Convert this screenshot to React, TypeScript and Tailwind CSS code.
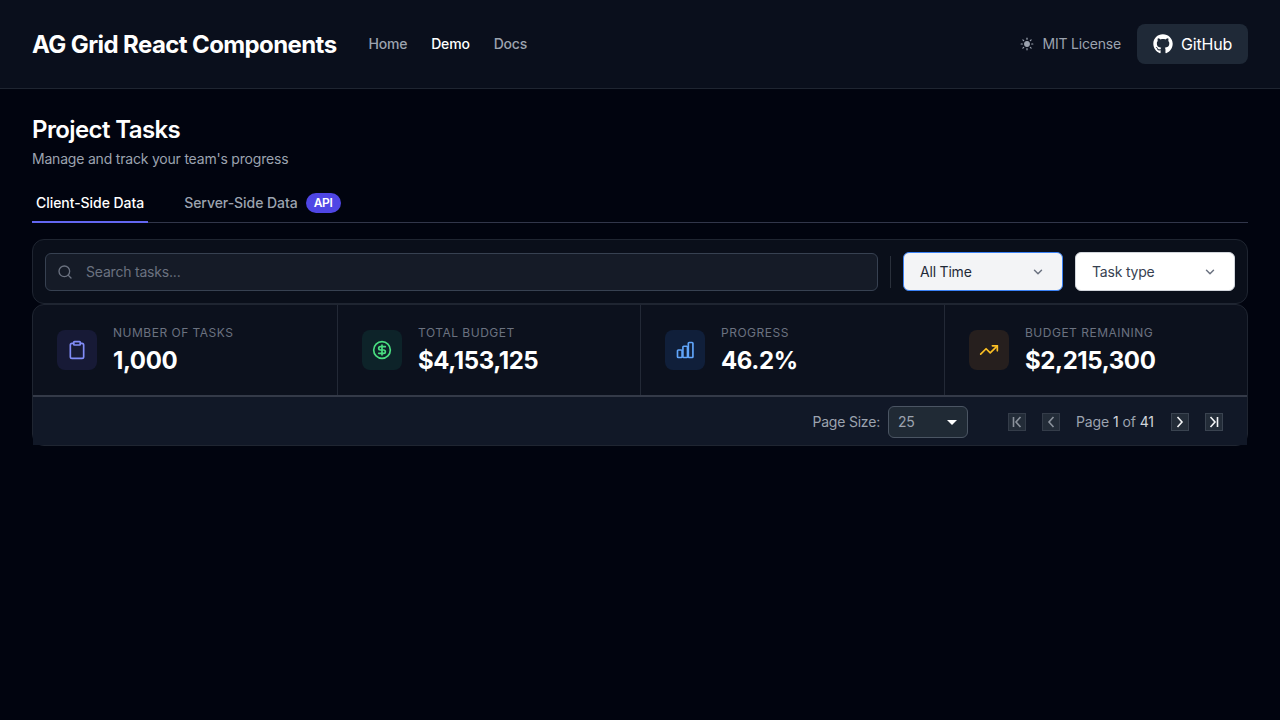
import { ChevronDown, CircleDollarSign, Search, Sun, TrendingUp } from "lucide-react";
import { FaGithub } from "react-icons/fa";
import React from "react";

function Clipboard({ className }: { className?: string }) {
  return (
    <svg viewBox="0 0 24 24" fill="none" stroke="currentColor" strokeWidth="2" strokeLinecap="round" strokeLinejoin="round" className={className}>
      <rect x="8" y="2" width="8" height="4" rx="1" />
      <path d="M16 4h2a2 2 0 0 1 2 2v14a2 2 0 0 1-2 2H6a2 2 0 0 1-2-2V6a2 2 0 0 1 2-2h2" />
    </svg>
  );
}

function Bars({ className }: { className?: string }) {
  return (
    <svg viewBox="0 0 24 24" fill="none" stroke="currentColor" strokeWidth="2" strokeLinecap="round" strokeLinejoin="round" className={className}>
      <rect x="3" y="12" width="5.5" height="9" rx="1" />
      <rect x="9.5" y="7.5" width="5.5" height="13.5" rx="1" />
      <rect x="16" y="3" width="5.5" height="18" rx="1" />
    </svg>
  );
}

const stats = [
  { label: "Number of Tasks", value: "1,000", Icon: Clipboard, box: "bg-[#171a36]", color: "text-[#818cf8]", width: "w-[305px]" },
  { label: "Total Budget", value: "$4,153,125", Icon: CircleDollarSign, box: "bg-[#0d2329]", color: "text-[#4ade80]", width: "w-[303px]" },
  { label: "Progress", value: "46.2%", Icon: Bars, box: "bg-[#101f3a]", color: "text-[#60a5fa]", width: "w-[304px]" },
  { label: "Budget Remaining", value: "$2,215,300", Icon: TrendingUp, box: "bg-[#261f1e]", color: "text-[#fbbf24]", width: "flex-1" },
];

function PageButton({ d, dim }: { d: string; dim?: boolean }) {
  return (
    <div className={dim ? "flex size-[18px] items-center justify-center border border-[#343c49] bg-[#232c38] text-[#8b929c]" : "flex size-[18px] items-center justify-center border border-[#3a4350] bg-[#232c38] text-[#f3f4f6]"}>
      <svg viewBox="0 0 16 16" fill="none" stroke="currentColor" strokeWidth="1.6" className="size-4">
        <path d={d} />
      </svg>
    </div>
  );
}

export default function App() {
  return (
    <div className="min-h-screen bg-[#01040f] font-['Inter',sans-serif] tracking-[-0.2px] text-white">
      <header className="flex h-[89px] items-center justify-between border-b border-[#1f2531] bg-[#0a0f1c] px-8">
        <div className="flex items-center gap-8">
          <h1 className="pt-0.5 text-2xl font-bold tracking-[-0.6px]">AG Grid React Components</h1>
          <nav className="flex items-center gap-6 text-sm font-medium text-[#9ca3af]">
            <span>Home</span>
            <span className="text-white">Demo</span>
            <span>Docs</span>
          </nav>
        </div>
        <div className="flex items-center gap-4">
          <div className="flex items-center gap-[9px] text-sm text-[#9ca3af]">
            <Sun className="size-3.5" fill="currentColor" />
            <span>MIT License</span>
          </div>
          <div className="flex h-10 items-center gap-2 rounded-lg bg-[#1f2937] px-4 text-base">
            <FaGithub className="size-5" />
            <span>GitHub</span>
          </div>
        </div>
      </header>

      <main className="px-8 pt-[25px]">
        <h2 className="text-2xl leading-8 font-semibold tracking-[-0.6px]">Project Tasks</h2>
        <p className="mt-[3px] text-sm text-[#9ca3af]">Manage and track your team's progress</p>

        <div className="mt-[14px] flex h-10 items-stretch gap-8 border-b border-[#31364a] text-sm font-medium tracking-[-0.05px]">
          <div className="-mb-px flex items-center border-b-2 border-[#6366f1] px-1 pt-0.5">Client-Side Data</div>
          <div className="-mb-px flex items-center gap-2 border-b-2 border-transparent px-1 pt-0.5 text-[#9ca3af]">
            <span>Server-Side Data</span>
            <span className="rounded-full bg-[#4f46e5] px-2 py-0.5 text-xs leading-4 font-semibold tracking-[-0.3px] text-white">API</span>
          </div>
        </div>

        <div className="mt-4 flex h-[65px] items-center gap-3 rounded-xl border border-[#1f2531] bg-[#0a0f1a] px-3">
          <div className="flex h-[38px] flex-1 items-center gap-3 rounded-md border border-[#374151] bg-[#151b27] px-[11px] text-sm text-[#6b7280]">
            <Search className="size-4 shrink-0" />
            <span className="ml-px">Search tasks...</span>
          </div>
          <div className="h-8 w-px bg-[#2a303b]" />
          <div className="flex h-[39px] w-[160px] items-center justify-between rounded-md border border-[#3b82f6] bg-[#f3f4f6] pr-[17px] pl-4 text-sm text-[#1f2937]">
            <span>All Time</span>
            <ChevronDown className="size-3.5 text-[#6b7280]" strokeWidth={2.5} />
          </div>
          <div className="flex h-[39px] w-[160px] items-center justify-between rounded-md border border-[#d1d5db] bg-white pr-[17px] pl-4 text-sm text-[#374151]">
            <span>Task type</span>
            <ChevronDown className="size-3.5 text-[#6b7280]" strokeWidth={2.5} />
          </div>
        </div>

        <div className="rounded-xl border border-[#1f2531] bg-[#0c111d]">
          <div className="flex h-[90px]">
            {stats.map(({ label, value, Icon, box, color, width }) => (
              <div key={label} className={`flex items-center gap-4 border-r border-[#232936] pr-4 pl-6 last:border-r-0 ${width}`}>
                <div className={`flex size-10 items-center justify-center rounded-lg ${box}`}>
                  <Icon className={`size-5 ${color}`} />
                </div>
                <div className="mt-[2px]">
                  <div className="text-xs leading-4 tracking-[0.5px] text-[#6b7280] uppercase">{label}</div>
                  <div className="mt-1 text-2xl leading-8 font-bold tracking-[-0.4px]">{value}</div>
                </div>
              </div>
            ))}
          </div>
          <div className="flex h-[50px] items-center justify-end border-t-2 border-[#343a48] bg-[#111827] pt-0.5 pr-6 text-sm text-[#9ca3af]">
            <span>Page Size:</span>
            <div className="ml-2 flex h-8 w-20 items-center justify-between rounded-md border border-[#4b5563] bg-[#202a35] px-[9px] text-[#9ca3af]">
              <span>25</span>
              <span className="mr-[1px] h-0 w-0 border-x-[5px] border-t-[5px] border-x-transparent border-t-white" />
            </div>
            <div className="ml-10 flex items-center gap-4">
              <PageButton dim d="M4.5 3v10M11.5 3L7 8l4.5 5" />
              <PageButton dim d="M10.5 3L6 8l4.5 5" />
              <span className="w-[79px] tracking-[-0.1px] whitespace-nowrap">
                Page <span className="text-[#d1d5db]">1</span> of <span className="text-[#d1d5db]">41</span>
              </span>
              <PageButton d="M5.5 3L10 8l-4.5 5" />
              <PageButton d="M11.5 3v10M4.5 3L9 8l-4.5 5" />
            </div>
          </div>
        </div>
      </main>
    </div>
  );
}
